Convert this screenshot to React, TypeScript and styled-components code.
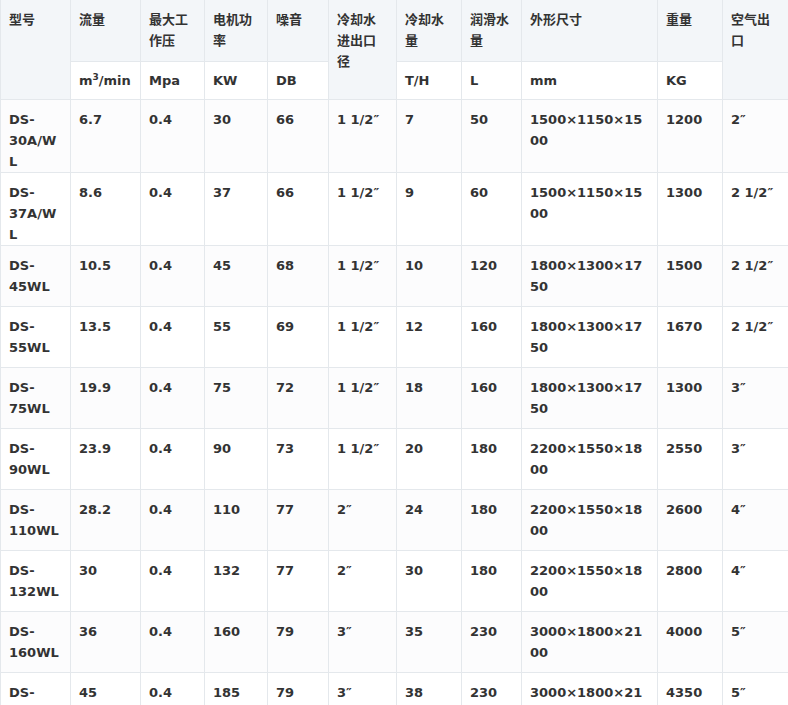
import React from 'react';
import styled, { createGlobalStyle } from 'styled-components';

const GlobalStyle = createGlobalStyle`
	body {
		margin: 0;
		background: #ffffff;
		font-family: "DejaVu Sans", "Noto Sans CJK SC", sans-serif;
		overflow: hidden;
	}
`;

const widths = [70, 70, 64, 63, 61, 68, 65, 60, 136, 65, 66];

const Table = styled.table`
	width: 788px;
	table-layout: fixed;
	border-collapse: collapse;
	color: #333333;
	font-size: 13px;
	font-weight: 700;
	line-height: 21px;
`;

const Row = styled.tr<{ $h: number; $alt?: boolean }>`
	height: ${(p) => p.$h}px;
	background: ${(p) => (p.$alt ? '#fcfcfd' : '#ffffff')};
`;

const Th = styled.th<{ $light?: boolean }>`
	padding: 9px 8px 0 8px;
	vertical-align: top;
	text-align: left;
	font-weight: 700;
	border: 1px solid #e4e8ec;
	border-top: none;
	background: ${(p) => (p.$light ? '#ffffff' : '#f3f6f9')};
	word-break: break-all;
`;

const Unit = styled(Th)`
	padding-top: 8px;
`;

const Td = styled.td`
	padding: 9px 8px 0 8px;
	vertical-align: top;
	border: 1px solid #e4e8ec;
	word-break: break-all;
`;

const Sup = styled.sup`
	font-size: 9px;
	line-height: 0;
`;

const rows = [
	['DS-30A/WL', '6.7', '0.4', '30', '66', '1 1/2″', '7', '50', '1500×1150×1500', '1200', '2″'],
	['DS-37A/WL', '8.6', '0.4', '37', '66', '1 1/2″', '9', '60', '1500×1150×1500', '1300', '2 1/2″'],
	['DS-45WL', '10.5', '0.4', '45', '68', '1 1/2″', '10', '120', '1800×1300×1750', '1500', '2 1/2″'],
	['DS-55WL', '13.5', '0.4', '55', '69', '1 1/2″', '12', '160', '1800×1300×1750', '1670', '2 1/2″'],
	['DS-75WL', '19.9', '0.4', '75', '72', '1 1/2″', '18', '160', '1800×1300×1750', '1300', '3″'],
	['DS-90WL', '23.9', '0.4', '90', '73', '1 1/2″', '20', '180', '2200×1550×1800', '2550', '3″'],
	['DS-110WL', '28.2', '0.4', '110', '77', '2″', '24', '180', '2200×1550×1800', '2600', '4″'],
	['DS-132WL', '30', '0.4', '132', '77', '2″', '30', '180', '2200×1550×1800', '2800', '4″'],
	['DS-160WL', '36', '0.4', '160', '79', '3″', '35', '230', '3000×1800×2100', '4000', '5″'],
	['DS-185WL', '45', '0.4', '185', '79', '3″', '38', '230', '3000×1800×2100', '4350', '5″'],
];

function Model({ name }: { name: string }) {
	const [a, b] = name.split('-');
	return (
		<>
			{a}-<br />
			{b}
		</>
	);
}

export default function App() {
	return (
		<>
			<GlobalStyle />
			<Table>
				<colgroup>
					{widths.map((w, i) => (
						<col key={i} style={{ width: w }} />
					))}
				</colgroup>
				<thead>
					<Row $h={61}>
						<Th rowSpan={2}>型号</Th>
						<Th>流量</Th>
						<Th>最大工作压</Th>
						<Th>电机功率</Th>
						<Th>噪音</Th>
						<Th rowSpan={2}>冷却水进出口径</Th>
						<Th>冷却水量</Th>
						<Th>润滑水量</Th>
						<Th>外形尺寸</Th>
						<Th>重量</Th>
						<Th rowSpan={2}>空气出口</Th>
					</Row>
					<Row $h={38}>
						<Unit $light>
							m<Sup>3</Sup>/min
						</Unit>
						<Unit $light>Mpa</Unit>
						<Unit $light>KW</Unit>
						<Unit $light>DB</Unit>
						<Unit $light>T/H</Unit>
						<Unit $light>L</Unit>
						<Unit $light>mm</Unit>
						<Unit $light>KG</Unit>
					</Row>
				</thead>
				<tbody>
					{rows.map((r, i) => (
						<Row key={r[0]} $h={61} $alt={i % 2 === 0}>
							<Td>
								<Model name={r[0]} />
							</Td>
							{r.slice(1).map((c, j) => (
								<Td key={j}>{c}</Td>
							))}
						</Row>
					))}
				</tbody>
			</Table>
		</>
	);
}
